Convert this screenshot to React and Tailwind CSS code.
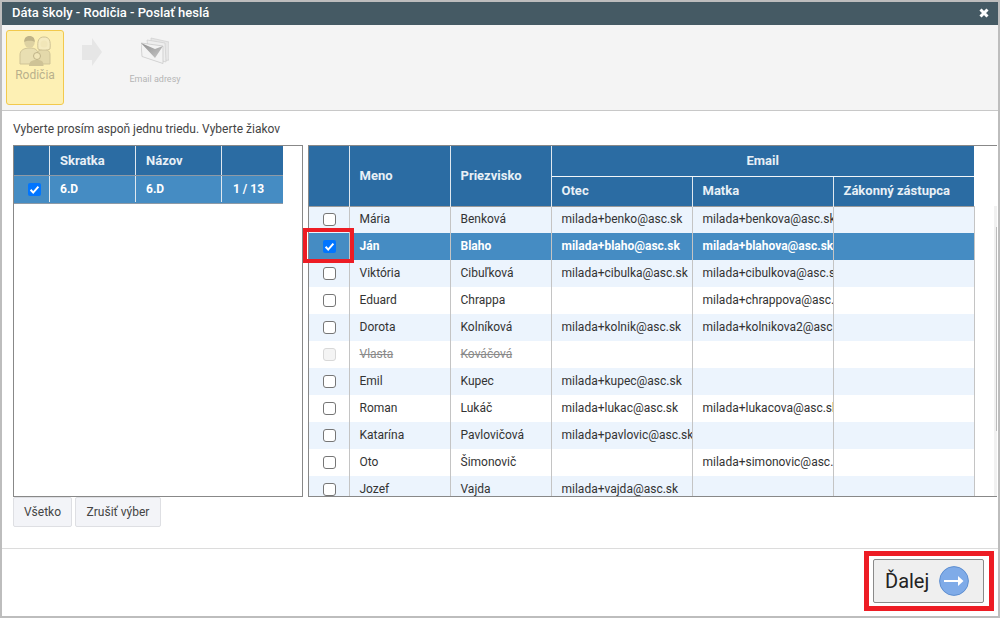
const font = "font-['Roboto',sans-serif]";

const students = [
  { first: "Mária", last: "Benková", otec: "milada+benko@asc.sk", matka: "milada+benkova@asc.sk" },
  { first: "Ján", last: "Blaho", otec: "milada+blaho@asc.sk", matka: "milada+blahova@asc.sk", selected: true },
  { first: "Viktória", last: "Cibuľková", otec: "milada+cibulka@asc.sk", matka: "milada+cibulkova@asc.sk" },
  { first: "Eduard", last: "Chrappa", otec: "", matka: "milada+chrappova@asc.sk" },
  { first: "Dorota", last: "Kolníková", otec: "milada+kolnik@asc.sk", matka: "milada+kolnikova2@asc.sk" },
  { first: "Vlasta", last: "Kováčová", otec: "", matka: "", disabled: true },
  { first: "Emil", last: "Kupec", otec: "milada+kupec@asc.sk", matka: "" },
  { first: "Roman", last: "Lukáč", otec: "milada+lukac@asc.sk", matka: "milada+lukacova@asc.sk" },
  { first: "Katarína", last: "Pavlovičová", otec: "milada+pavlovic@asc.sk", matka: "" },
  { first: "Oto", last: "Šimonovič", otec: "", matka: "milada+simonovic@asc.sk" },
  { first: "Jozef", last: "Vajda", otec: "milada+vajda@asc.sk", matka: "" },
];

function Check({ checked, disabled }) {
  if (checked) {
    return (
      <span className="flex h-[13px] w-[13px] items-center justify-center rounded-[2px] bg-[#0075ff]">
        <svg viewBox="0 0 13 13" className="h-[13px] w-[13px]">
          <path d="M2.6 6.8 L5.2 9.6 L10.4 3.6" fill="none" stroke="#fff" strokeWidth="2" />
        </svg>
      </span>
    );
  }
  return (
    <span
      className={`block h-[13px] w-[13px] rounded-[3px] border ${
        disabled ? "border-[#d8d8d8] bg-[#f4f4f4]" : "border-[#767676] bg-white"
      }`}
    />
  );
}

function ParentsIcon() {
  return (
    <svg viewBox="0 0 32 31" className="h-[31px] w-8">
      {/* father */}
      <path d="M1 29 L1 20 C1 15 5 13 11 13 C16 13 19 15 19 19 L19 29 Z" fill="#e9dfb2" stroke="#cfc396" />
      <circle cx="10.5" cy="7.5" r="5.2" fill="#ded2a2" />
      <path d="M5.2 7 C5 2.5 8 1 10.5 1 C13 1 16 2.5 15.8 7 C14 5.5 8 5 5.2 7 Z" fill="#bfb388" />
      {/* mother */}
      <path d="M18 29 L18 19 C18 16 21 14.5 25 14.5 C29 14.5 31 16.5 31 20 L31 29 Z" fill="#e4d9aa" stroke="#cfc396" />
      <path d="M19 14 C18 5 20 2 25 2 C30 2 32 5 31 14 C29 15.5 21 15.5 19 14 Z" fill="#f5ebc0" stroke="#cfc396" />
      <circle cx="25" cy="9" r="3.6" fill="#f1e6b8" />
      {/* child */}
      <circle cx="18" cy="21" r="3.5" fill="#f1e6b8" stroke="#bfb388" />
      <path d="M10 31 C10 26.5 13 25 18 25 C23 25 24.5 26.5 24.5 31 Z" fill="#cfc396" />
    </svg>
  );
}

function MailStackIcon() {
  return (
    <svg viewBox="0 0 28 27" className="h-[27px] w-[28px]">
      <defs>
        <linearGradient id="flap" x1="0" y1="0" x2="1" y2="1">
          <stop offset="0" stopColor="#8e8e8e" />
          <stop offset="1" stopColor="#c8c8c8" />
        </linearGradient>
      </defs>
      <path d="M10 1 L28 5 L28 23 L22 24 L10 18 Z" fill="#e6e6e6" stroke="#cfcfcf" strokeWidth="0.7" />
      <path d="M6 3 L24 6 L25 25 L8 20 Z" fill="#eeeeee" stroke="#cfcfcf" strokeWidth="0.7" />
      <path d="M0 6 L22 9 L22 26.5 L1 19.5 Z" fill="#f3f3f3" stroke="#c4c4c4" strokeWidth="0.7" />
      <path d="M0 6 L14 21 L22 9 L14 12 Z" fill="url(#flap)" />
    </svg>
  );
}

export default function App() {
  return (
    <div className={`${font} relative flex h-[618px] w-[1000px] flex-col overflow-hidden border-2 border-[#bdbdbd] bg-white text-[12px] text-[#333]`}>
      {/* title */}
      <div className="flex h-[23px] shrink-0 items-center justify-between bg-[#455a64] pb-[1px] pl-[10px] pr-[9px] text-[13px] font-medium text-white">
        <span>Dáta školy - Rodičia - Poslať heslá</span>
        <svg viewBox="0 0 10 10" className="h-[10px] w-[10px]">
          <path d="M1.5 1.5 L8.5 8.5 M8.5 1.5 L1.5 8.5" stroke="#fff" strokeWidth="3" />
        </svg>
      </div>

      {/* steps */}
      <div className="flex h-[86px] shrink-0 items-start border-b border-[#c8c8c8] bg-[#f4f4f4] pl-1 pt-[5px]">
        <div className="flex h-[75px] w-[58px] flex-col items-center rounded-[3px] border border-[#f2c94c] bg-[#fdf0b4] pt-[4px] text-[12px] text-[#b9b08c]">
          <ParentsIcon />
          <span>Rodičia</span>
        </div>
        <svg viewBox="0 0 20 28" className="ml-[18px] mt-[8px] h-[28px] w-[20px]">
          <path d="M0 7 L10 7 L10 0 L20 14 L10 28 L10 22 L0 22 Z" fill="#e6e6e6" />
        </svg>
        <div className="ml-[26px] flex w-[54px] flex-col items-center pt-[7px] text-[9px] text-[#b4b4b4]">
          <MailStackIcon />
          <span className="mt-[9px] whitespace-nowrap">Email adresy</span>
        </div>
      </div>

      {/* body */}
      <div className="flex min-h-0 flex-1 flex-col px-[11px]">
        <div className="flex h-[34px] shrink-0 items-center pt-[2px] text-[12px] text-[#444]">
          Vyberte prosím aspoň jednu triedu. Vyberte žiakov
        </div>

        <div className="flex h-[352px] shrink-0 gap-[5px]">
          <div className="h-full w-[290px] shrink-0 border border-[#888]">
            <div className="grid h-[29px] w-[269px] grid-cols-[36px_86px_86px_61px] bg-[#2b6ca3] text-[13px] font-bold text-[#e8f0f6]">
              <div className="border-r border-[#dfe8ef]" />
              <div className="flex items-center border-r border-[#dfe8ef] pl-[10px]">Skratka</div>
              <div className="flex items-center border-r border-[#dfe8ef] pl-[10px]">Názov</div>
              <div />
            </div>
            <div className="grid h-[29px] w-[269px] grid-cols-[36px_86px_86px_61px] border-y border-y-[#8e9aa6] bg-[#458cc3] pb-[1px] text-[12px] font-bold text-white">
              <div className="flex items-center justify-center border-r border-[#dfe8ef] pl-[5px]">
                <Check checked />
              </div>
              <div className="flex items-center border-r border-[#dfe8ef] pl-[10px]">6.D</div>
              <div className="flex items-center border-r border-[#dfe8ef] pl-[10px]">6.D</div>
              <div className="flex items-center pl-[11px]">1 / 13</div>
            </div>
          </div>

          <div className="relative h-full w-[689px] shrink-0 overflow-hidden border-y border-l border-[#888]">
            <table className="w-[665px] table-fixed border-collapse text-[12px]">
              <colgroup>
                <col className="w-[40px]" />
                <col className="w-[101px]" />
                <col className="w-[101px]" />
                <col className="w-[141px]" />
                <col className="w-[141px]" />
                <col className="w-[141px]" />
              </colgroup>
              <thead className="bg-[#2b6ca3] text-left text-[13px] font-bold text-[#e8f0f6]">
                <tr className="h-[30px]">
                  <th rowSpan={2} className="border-r border-[#dfe8ef]" />
                  <th rowSpan={2} className="border-r border-[#dfe8ef] pl-[10px]">Meno</th>
                  <th rowSpan={2} className="border-r border-[#dfe8ef] pl-[10px]">Priezvisko</th>
                  <th colSpan={3} className="border-b border-[#f2f6f9] text-center">Email</th>
                </tr>
                <tr className="h-[30px] border-b border-[#9a9a9a]">
                  <th className="border-r border-[#dfe8ef] pl-[10px]">Otec</th>
                  <th className="border-r border-[#dfe8ef] pl-[10px]">Matka</th>
                  <th className="pl-[10px]">Zákonný zástupca</th>
                </tr>
              </thead>
              <tbody>
                {students.map((s, i) => {
                  const rowBg = s.selected ? "bg-[#458cc3] font-bold text-white" : i % 2 === 0 ? "bg-[#ecf4fd]" : "bg-white";
                  const nameCls = s.disabled ? "text-[#8a8a8a] line-through" : "";
                  return (
                    <tr key={s.first} className={`h-[27px] ${rowBg}`}>
                      <td className="border-r border-[#c4c4c4] pl-[14px]">
                        <Check checked={s.selected} disabled={s.disabled} />
                      </td>
                      <td className={`border-r border-[#c4c4c4] pb-[2px] pl-[10px] ${nameCls}`}>{s.first}</td>
                      <td className={`border-r border-[#c4c4c4] pb-[2px] pl-[10px] ${nameCls}`}>{s.last}</td>
                      <td className="overflow-hidden whitespace-nowrap border-r border-[#c4c4c4] pb-[2px] pl-[10px]">{s.otec}</td>
                      <td className="overflow-hidden whitespace-nowrap border-r border-[#c4c4c4] pb-[2px] pl-[10px]">{s.matka}</td>
                      <td className="border-r border-[#c4c4c4]" />
                    </tr>
                  );
                })}
              </tbody>
            </table>
            <div className="absolute bottom-0 right-0 top-[60px] flex w-[3px] justify-end bg-[#f1f1f1]">
              <div className="mt-[21px] h-[204px] w-[1px] bg-[#bcbcbc]" />
            </div>
          </div>
        </div>

        <div className="flex shrink-0 gap-[3px]">
          <button className="h-[30px] w-[59px] rounded-[2px] border border-[#dedfe3] bg-[#f3f4f8] text-[12px] text-[#444]">Všetko</button>
          <button className="h-[30px] w-[86px] rounded-[2px] border border-[#dedfe3] bg-[#f3f4f8] text-[12px] text-[#444]">Zrušiť výber</button>
        </div>
      </div>

      {/* footer */}
      <div className="flex h-[68px] shrink-0 items-start justify-end border-t border-[#dcdcdc] pr-[14px] pt-[10px]">
        <button className="flex h-[44px] w-[111px] items-center gap-[10px] rounded-[2px] border border-[#8a8a8a] bg-[#efefef] pl-[11px] text-[20px] text-[#222]">
          <span>Ďalej</span>
          <svg viewBox="0 0 30 30" className="h-[30px] w-[30px]">
            <circle cx="15" cy="15" r="14.4" fill="#7fabe8" stroke="#5f8fd0" />
            <path d="M5 14 L19 14 L19 10 L24.5 15 L19 20 L19 16 L5 16 Z" fill="#fff" />
          </svg>
        </button>
      </div>

      {/* red callouts */}
      <div className="absolute left-[301px] top-[226px] h-[35px] w-[51px] border-[4px] border-[#ed1c24]" />
      <div className="absolute left-[862px] top-[549px] h-[60px] w-[130px] border-[5px] border-[#ed1c24]" />
    </div>
  );
}
